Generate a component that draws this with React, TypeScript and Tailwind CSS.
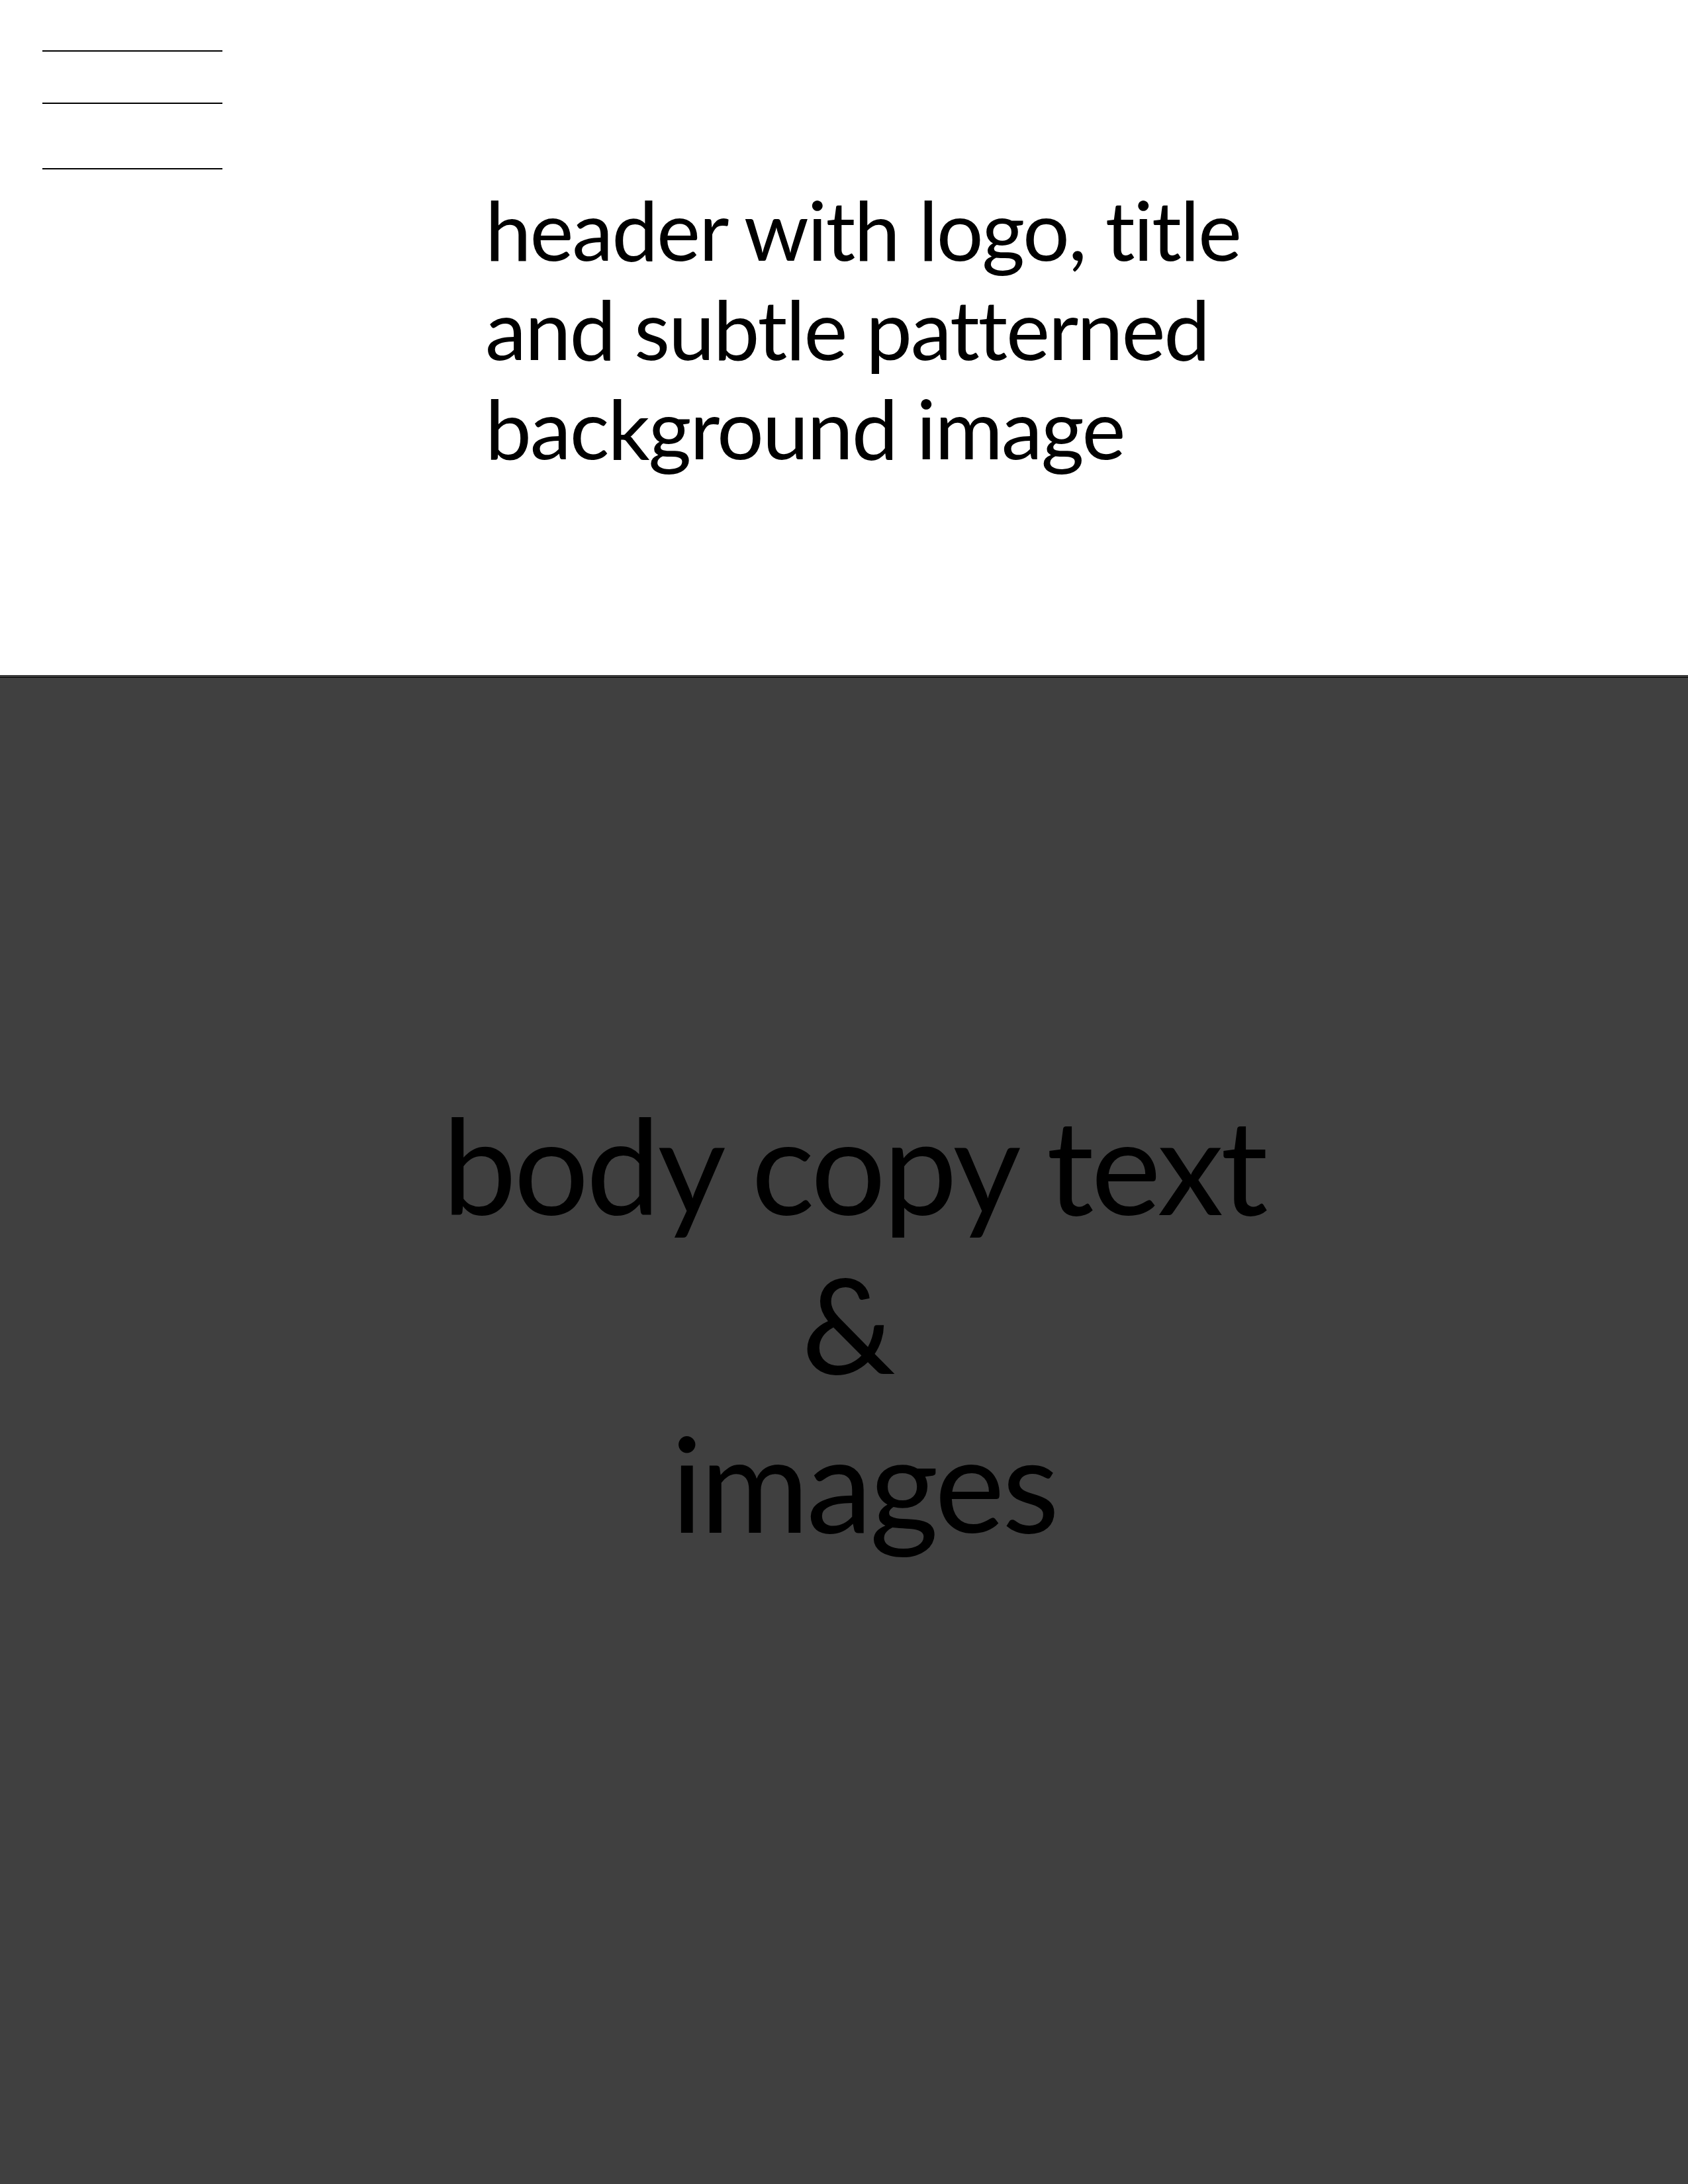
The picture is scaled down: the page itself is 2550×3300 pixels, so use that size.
export default function App() {
  return (
    <div
      className="min-h-[3300px] w-full flex flex-col bg-white [font-variant-ligatures:none]"
      style={{ fontFamily: '"Lato", "Open Sans", sans-serif' }}
    >
      {/* Header */}
      <header className="h-[1020px] bg-white flex flex-col">
        {/* Menu icon */}
        <div className="ml-[64px] w-[272px] pt-[76px] flex flex-col">
          <div className="h-[2px] bg-black"></div>
          <div className="h-[2px] bg-black mt-[77px]"></div>
          <div className="h-[2px] bg-black mt-[97px]"></div>
        </div>

        <div className="mt-[15px] pl-[733px] text-[125px] leading-[150px] tracking-[-2.2px] text-black">
          <p>header with logo, title</p>
          <p>and subtle patterned</p>
          <p>background image</p>
        </div>
      </header>

      {/* Body */}
      <main className="flex-1 bg-[#404040] border-t-[3px] border-[#3a3a3a]">
        <div className="border-t border-black"></div>
        <div className="pt-[615px] pl-[30px] text-center text-[200px] leading-[240px] tracking-[-4px] text-black">
          <p>body copy text</p>
          <p className="pr-[20px]">&amp;</p>
          <p className="pl-[30px]">images</p>
        </div>
      </main>
    </div>
  );
}
